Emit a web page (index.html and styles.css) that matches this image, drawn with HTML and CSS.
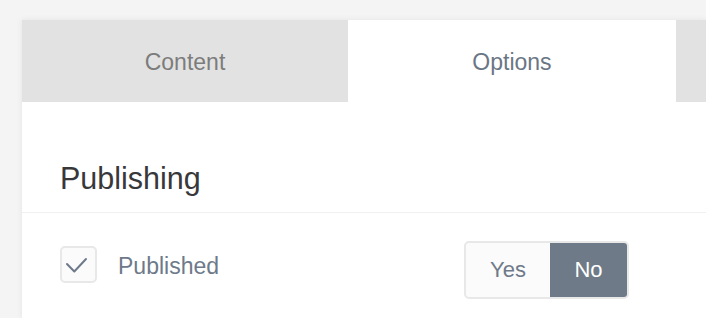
FILE: index.html
```html
<!DOCTYPE html>
<html lang="en">
<head>
<meta charset="UTF-8">
<meta name="viewport" content="width=device-width, initial-scale=1.0">
<title>Options</title>
<link rel="stylesheet" href="styles.css">
</head>
<body>

<!-- Editor panel -->
<div class="panel">
    <div class="tabs">
        <div class="tab">Content</div>
        <div class="tab active">Options</div>
        <div class="tab rest"></div>
    </div>

    <!-- Publishing section -->
    <div class="section-head">
        <h2>Publishing</h2>
    </div>

    <div class="field-row">
        <label class="check">
            <span class="check-box">
                <svg width="37" height="37" viewBox="0 0 37 37">
                    <path d="M7 18 L14.3 25.5 L26 13" fill="none" stroke="#6e7a8a" stroke-width="2" stroke-linecap="round" stroke-linejoin="round"/>
                </svg>
            </span>
            <span class="check-label">Published</span>
        </label>
        <div class="toggle">
            <span class="toggle-opt">Yes</span>
            <span class="toggle-opt on">No</span>
        </div>
    </div>
</div>

</body>
</html>
```

FILE: styles.css
```css
* {
    box-sizing: border-box;
    margin: 0;
    padding: 0;
    font-family: "Liberation Sans", Arial, sans-serif;
}

body {
    background-color: #f4f4f4;
    padding: 20px 0 0 22px;
    overflow: hidden;
    height: 318px;
}

.panel {
    width: 684px;
    height: 298px;
    overflow: hidden;
    background-color: #fff;
    box-shadow: 0 0 6px rgba(0, 0, 0, 0.07);
}

.tabs {
    display: flex;
}

.tab {
    flex: 0 0 326px;
    height: 82px;
    padding-top: 3px;
    display: flex;
    align-items: center;
    justify-content: center;
    background-color: #e2e2e2;
    color: #7c7c7c;
    font-size: 23px;
}

.tab.active {
    flex-basis: 328px;
    background-color: #fff;
    color: #6b7685;
}

.tab.rest {
    flex: 1;
}

.section-head {
    padding: 58px 38px 16px;
    border-bottom: 1px solid #f0f0f0;
}

.section-head h2 {
    font-size: 30.5px;
    font-weight: normal;
    line-height: 36px;
    color: #38383a;
}

.field-row {
    display: flex;
    align-items: flex-start;
    padding: 28px 38px 0;
}

.check {
    flex: 0 0 404px;
    display: flex;
    align-items: center;
    margin-top: 5px;
}

.check-box {
    width: 37px;
    height: 37px;
    border: 2px solid #e8e8e8;
    border-radius: 5px;
    background-color: #fbfbfb;
    position: relative;
}

.check-box svg {
    position: absolute;
    left: -2px;
    top: -2px;
}

.check-label {
    margin-left: 21px;
    padding-top: 3px;
    font-size: 23px;
    color: #6e7a8a;
}

.toggle {
    display: flex;
    height: 58px;
    border: 2px solid #e8e8e8;
    border-radius: 5px;
    background-color: #fbfbfb;
}

.toggle-opt {
    display: flex;
    align-items: center;
    justify-content: center;
    width: 84px;
    font-size: 22px;
    color: #6e7a8a;
}

.toggle-opt.on {
    width: 77px;
    background-color: #6e7a87;
    color: #fff;
    border-radius: 0 3px 3px 0;
}
```
